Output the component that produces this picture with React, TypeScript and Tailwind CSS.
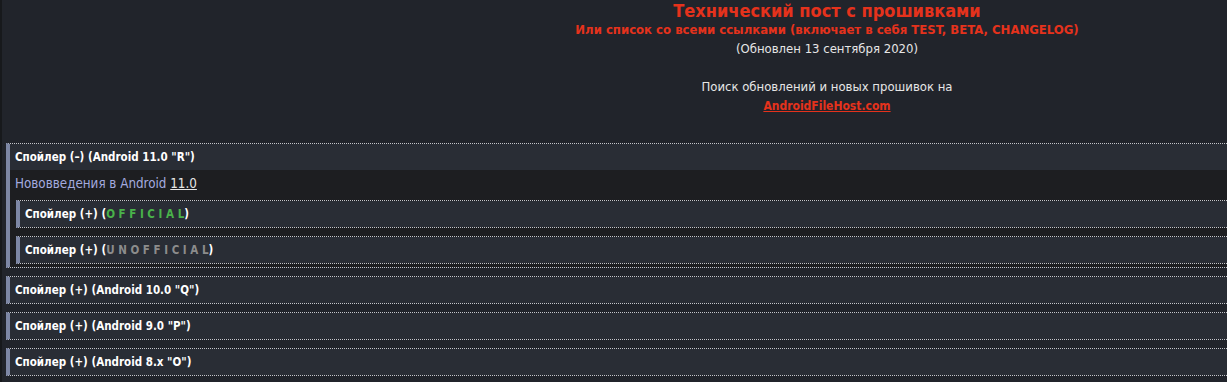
import React from 'react';

const font = { fontFamily: '"DejaVu Sans Condensed", "DejaVu Sans", Tahoma, sans-serif' };

function SpoilerHead({ children }: { children: React.ReactNode }) {
    return (
        <div className="h-[26px] flex items-center pl-[5px] pt-[2px] bg-[#292d35] text-[11.5px] font-bold text-white">
            {children}
        </div>
    );
}

function Spoiler({ label, children }: { label: React.ReactNode; children?: React.ReactNode }) {
    return (
        <div className="border-y border-dotted border-y-[#c4c6cc] border-l-4 [border-left-style:solid] border-l-[#7d87a5] mb-[8px] last:mb-0">
            <SpoilerHead>Спойлер {label}</SpoilerHead>
            {children}
        </div>
    );
}

export default function App() {
    return (
        <div className="min-h-screen w-full bg-[#21242b] border-l-2 border-[#17191c] overflow-hidden" style={font}>
            {/* ── header ── */}
            <div className="pl-[425px] text-center">
                <div className="text-[18px] leading-[22px] font-bold text-[#e5321c]">Технический пост с прошивками</div>
                <div className="text-[13px] leading-[16px] font-bold text-[#e5321c]">Или список со всеми ссылками (включает в себя TEST, BETA, CHANGELOG)</div>
                <div className="text-[13px] leading-[16px] text-[#e6e6e6] mt-[3px]">(Обновлен 13 сентября 2020)</div>
                <div className="text-[13px] leading-[16px] text-[#e6e6e6] mt-[22px]">Поиск обновлений и новых прошивок на</div>
                <div className="text-[12px] leading-[16px] mt-[3px]">
                    <span className="font-bold text-[#e5321c] underline">AndroidFileHost.com</span>
                </div>
            </div>

            {/* ── spoilers ── */}
            <div className="pl-[4px] mt-[29px]">
                <Spoiler label={<>(–) (Android 11.0 "R")</>}>
                    <div className="bg-[#1d1e21] pl-[5px] pb-[3px]">
                        <div className="h-[30px] pb-[2px] flex items-center text-[13.3px] text-[#a3aadf]">
                            Нововведения в Android&nbsp;<span className="text-[#e6e6e6] underline">11.0</span>
                        </div>
                        <div className="pl-[1px]">
                            <Spoiler label={<>(+) (<span className="text-[#49b34a] tracking-[3.6px]">OFFICIA</span><span className="text-[#49b34a]">L</span>)</>} />
                            <Spoiler label={<>(+) (<span className="text-[#8c8c8c] tracking-[3.6px]">UNOFFICIA</span><span className="text-[#8c8c8c]">L</span>)</>} />
                        </div>
                    </div>
                </Spoiler>
                <Spoiler label={<>(+) (Android 10.0 "Q")</>} />
                <Spoiler label={<>(+) (Android 9.0 "P")</>} />
                <Spoiler label={<>(+) (Android 8.x "O")</>} />
            </div>
        </div>
    );
}
